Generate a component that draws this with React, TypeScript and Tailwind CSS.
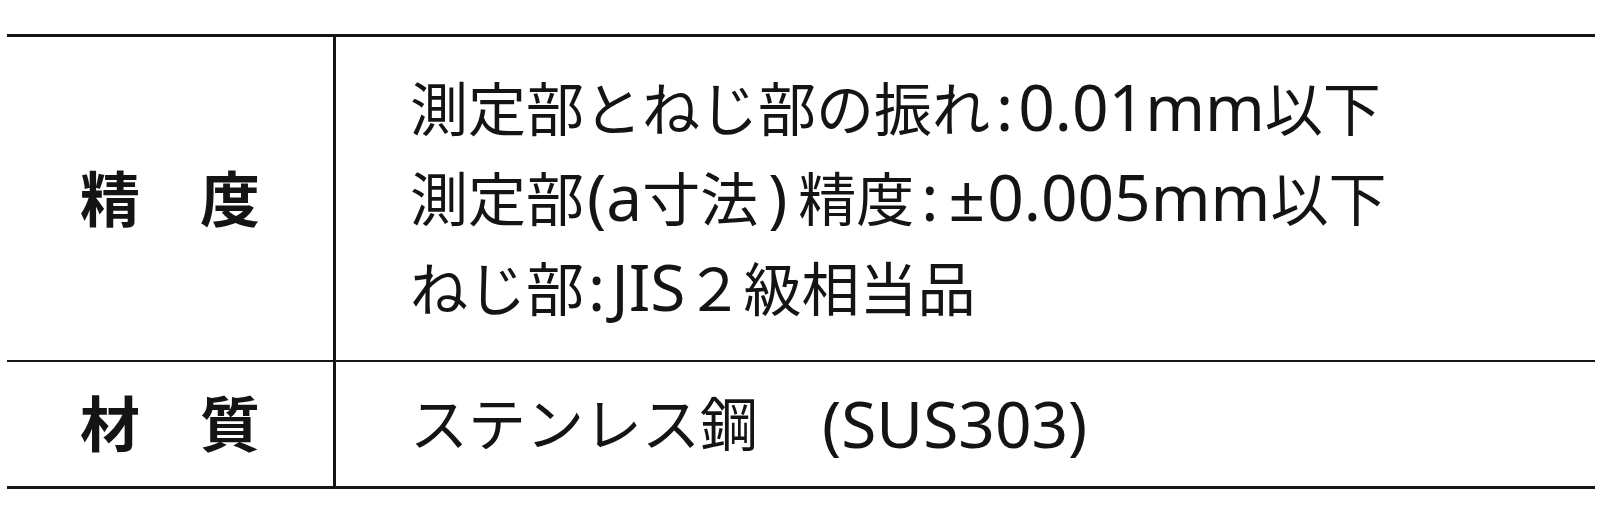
const rule = "border-[#161616]";

// half-width runs are set a little larger, as in the printed table
const L = ({ children, l = 0, r = 0 }: { children: string; l?: number; r?: number }) => (
  <span className="text-[64px] leading-none" style={{ marginLeft: l, marginRight: r }}>
    {children}
  </span>
);

export default function App() {
  return (
    <div className="w-[1600px] h-[521px] bg-white pt-[34px] pl-[7px] pr-[5px] text-[#141414] font-['Noto_Sans','Noto_Sans_CJK_JP',sans-serif]">
      <div className={`border-t-[3px] border-b-[3px] ${rule}`}>
        {/* 精度 */}
        <div className={`flex h-[325px] border-b-2 ${rule}`}>
          <div className={`w-[329px] shrink-0 border-r-[3px] ${rule} flex items-center justify-center text-[60px] font-bold leading-none`}>
            精　度
          </div>
          <div className="flex-1 flex flex-col justify-center pl-[74px] text-[58px] leading-[90px] whitespace-nowrap">
            <div>
              測定部とねじ部の振れ<L l={6} r={5}>:</L><L>0.01mm</L>以下
            </div>
            <div>
              測定部<L l={3}>(a</L>寸法<L l={10} r={11}>)</L>精度<L l={7} r={10}>:</L><L r={2}>±</L><L>0.005mm</L>以下
            </div>
            <div>
              ねじ部<L l={4} r={6}>:</L><L>JIS</L>２級相当品
            </div>
          </div>
        </div>
        {/* 材質 */}
        <div className="flex h-[124px]">
          <div className={`w-[329px] shrink-0 border-r-[3px] ${rule} flex items-center justify-center text-[60px] font-bold leading-none`}>
            材　質
          </div>
          <div className="flex-1 flex items-center pl-[74px] text-[58px] leading-[90px] whitespace-nowrap">
            ステンレス鋼　<L l={6}>(SUS303)</L>
          </div>
        </div>
      </div>
    </div>
  );
}
